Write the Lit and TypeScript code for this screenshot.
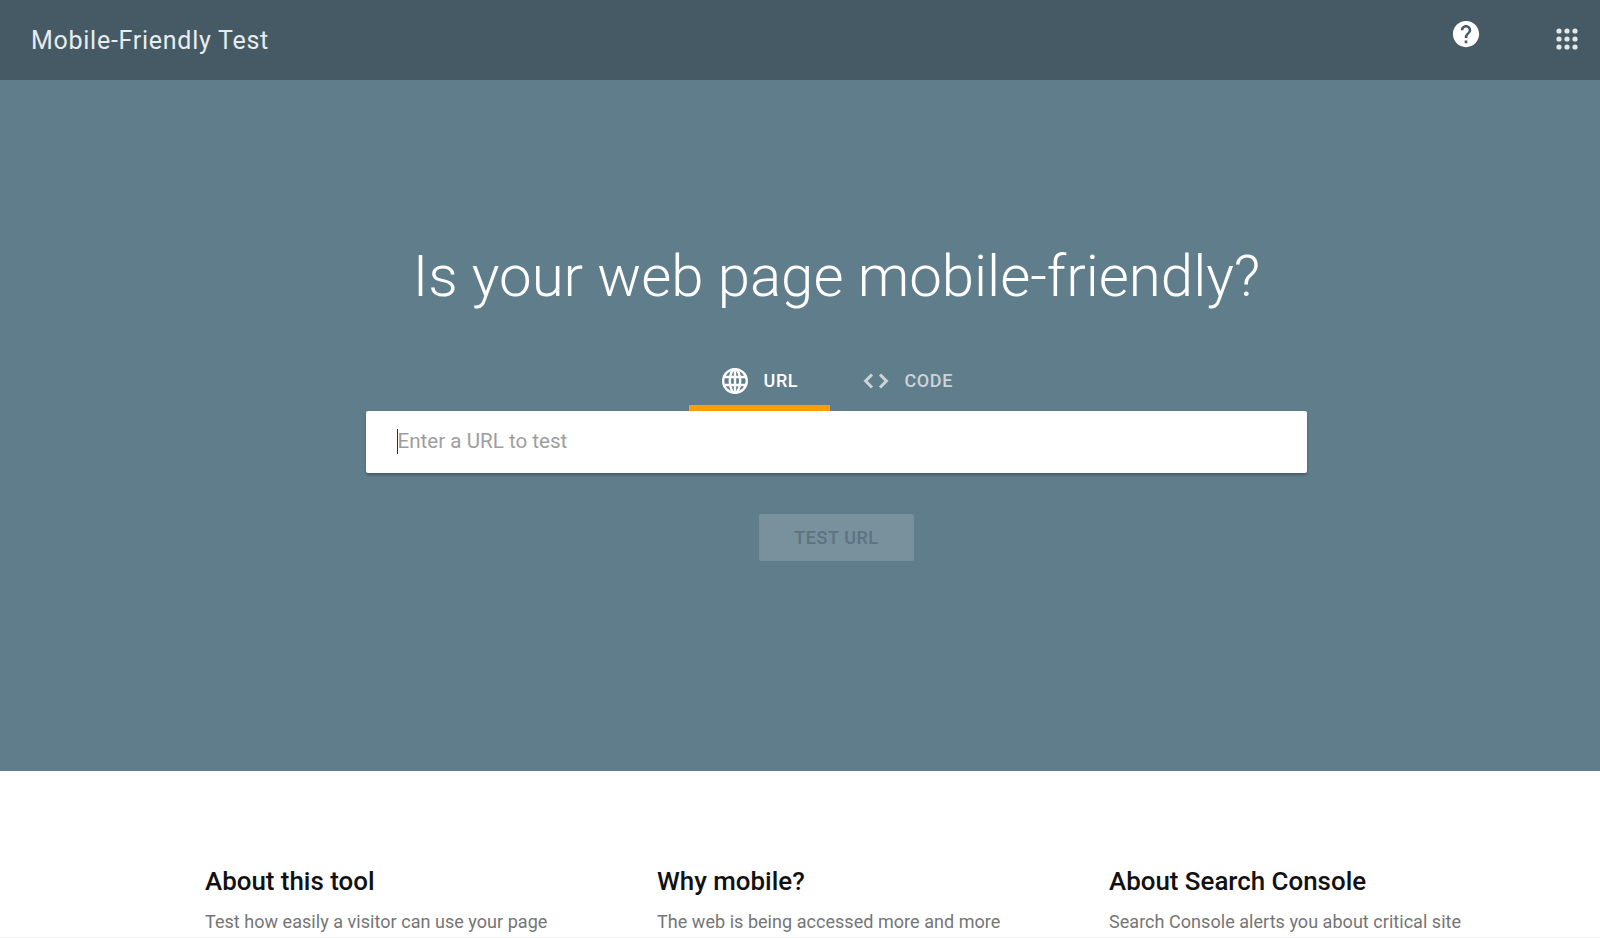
import { LitElement, html, svg, css } from "lit";
import { customElement } from "lit/decorators.js";

@customElement("app-root")
export class AppRoot extends LitElement {
  static styles = css`
    :host { display: block; height: 938px; box-sizing: border-box; overflow: hidden; background: #fff; border-bottom: 1px solid #eeeeee; font-family: Roboto, "Liberation Sans", sans-serif; }
    .top { height: 80px; background: #455a64; display: flex; align-items: center; box-sizing: border-box; padding-left: 31px; }
    .brand { font-size: 25px; font-weight: 400; letter-spacing: 0.73px; flex: 1; color: #e8ecee; }
    .help { width: 30px; height: 30px; margin-right: 75px; margin-bottom: 13px; display: block; }
    .apps { width: 22px; height: 22px; margin-right: 22px; margin-bottom: 2px; display: block; }
    .hero { height: 691px; background: #607d8b; display: flex; flex-direction: column; align-items: center; box-sizing: border-box; padding: 154px 0 0 73px; }
    h1 { margin: 0; font-size: 58.15px; line-height: 84px; font-weight: 300; color: #fff; }
    .tabs { display: flex; margin-top: 45px; height: 48px; width: 941px; padding-left: 322.5px; box-sizing: border-box; }
    .tab { display: flex; align-items: center; height: 48px; box-sizing: border-box; font-size: 18px; font-weight: 500; letter-spacing: 0.6px; padding: 0 0 6px 33px; gap: 16px; border-bottom: 6px solid transparent; }
    .tab svg { display: block; flex: none; }
    .tab span { margin-bottom: 2px; }
    .tab.url { width: 141px; color: #fff; border-bottom-color: #ff9e00; }
    .tab.code { color: #ccd4d8; }
    .field { width: 941px; height: 62px; background: #fff; border-radius: 2px; box-shadow: 0 2px 3px rgba(0,0,0,.28); display: flex; align-items: center; padding-left: 30.5px; box-sizing: border-box; font-size: 20.6px; color: #9e9e9e; }
    .field span:last-child { margin-bottom: 2px; }
    .caret { width: 1px; height: 25px; background: #263238; flex: none; margin-bottom: 1px; }
    .btn { margin-top: 41px; width: 155px; height: 47px; border-radius: 2px; background: #78919c; color: #5c7481; font-size: 18px; font-weight: 500; letter-spacing: 0.55px; display: flex; align-items: center; justify-content: center; }
    .cols { display: grid; grid-template-columns: repeat(3, 452px); padding: 96px 0 0 205px; }
    h2 { margin: 0; font-size: 25.9px; line-height: 28px; font-weight: 500; color: #111; }
    p { margin: 13px 0 0; font-size: 18px; line-height: 28px; letter-spacing: 0.04px; color: #757575; white-space: nowrap; }
  `;

  render() {
    return html`
      <header class="top">
        <div class="brand">Mobile-Friendly Test</div>
        <svg class="help" viewBox="0 0 24 24" aria-hidden="true"><path fill="#fff" d="M12 1.5C6.2 1.5 1.5 6.2 1.5 12S6.2 22.5 12 22.5 22.5 17.8 22.5 12 17.8 1.5 12 1.5zm1.05 17.85h-2.1v-2.1h2.1v2.1zm2.17-8.13-.94.97C13.52 13 13.05 13.63 13.05 15.2h-2.1v-.52c0-1.16.47-2.21 1.23-2.97l1.3-1.32c.39-.38.62-.9.62-1.49 0-1.16-.94-2.1-2.1-2.1s-2.1.94-2.1 2.1H7.8c0-2.32 1.88-4.2 4.2-4.2s4.2 1.88 4.2 4.2c0 .92-.37 1.76-.98 2.32z"/></svg>
        <svg class="apps" viewBox="0 0 22 22" fill="#e3e7e9" aria-hidden="true">
          ${[3, 11, 19].flatMap((y) => [3, 11, 19].map((x) => svg`<circle cx=${x} cy=${y} r="2.6"></circle>`))}
        </svg>
      </header>
      <section class="hero">
        <h1>Is your web page mobile-friendly?</h1>
        <div class="tabs">
          <div class="tab url">
            <svg width="26" height="26" viewBox="0 0 26 26" fill="none" stroke="#fff" stroke-width="2.4" aria-hidden="true"><circle cx="13" cy="13" r="11.8"/><ellipse cx="13" cy="13" rx="5.2" ry="11.8"/><path d="M13 1.2v23.6M2.4 9h21.2M2.4 17h21.2"/></svg>
            <span>URL</span>
          </div>
          <div class="tab code">
            <svg width="26" height="26" viewBox="0 0 26 26" fill="none" stroke="#ccd4d8" stroke-width="3" aria-hidden="true"><path d="M9 6.5 2.6 13 9 19.5M17 6.5l6.4 6.5L17 19.5"/></svg>
            <span>CODE</span>
          </div>
        </div>
        <div class="field"><span class="caret"></span><span>Enter a URL to test</span></div>
        <div class="btn">TEST URL</div>
      </section>
      <section class="cols">
        <div><h2>About this tool</h2><p>Test how easily a visitor can use your page</p></div>
        <div><h2>Why mobile?</h2><p>The web is being accessed more and more</p></div>
        <div><h2>About Search Console</h2><p>Search Console alerts you about critical site</p></div>
      </section>
    `;
  }
}
